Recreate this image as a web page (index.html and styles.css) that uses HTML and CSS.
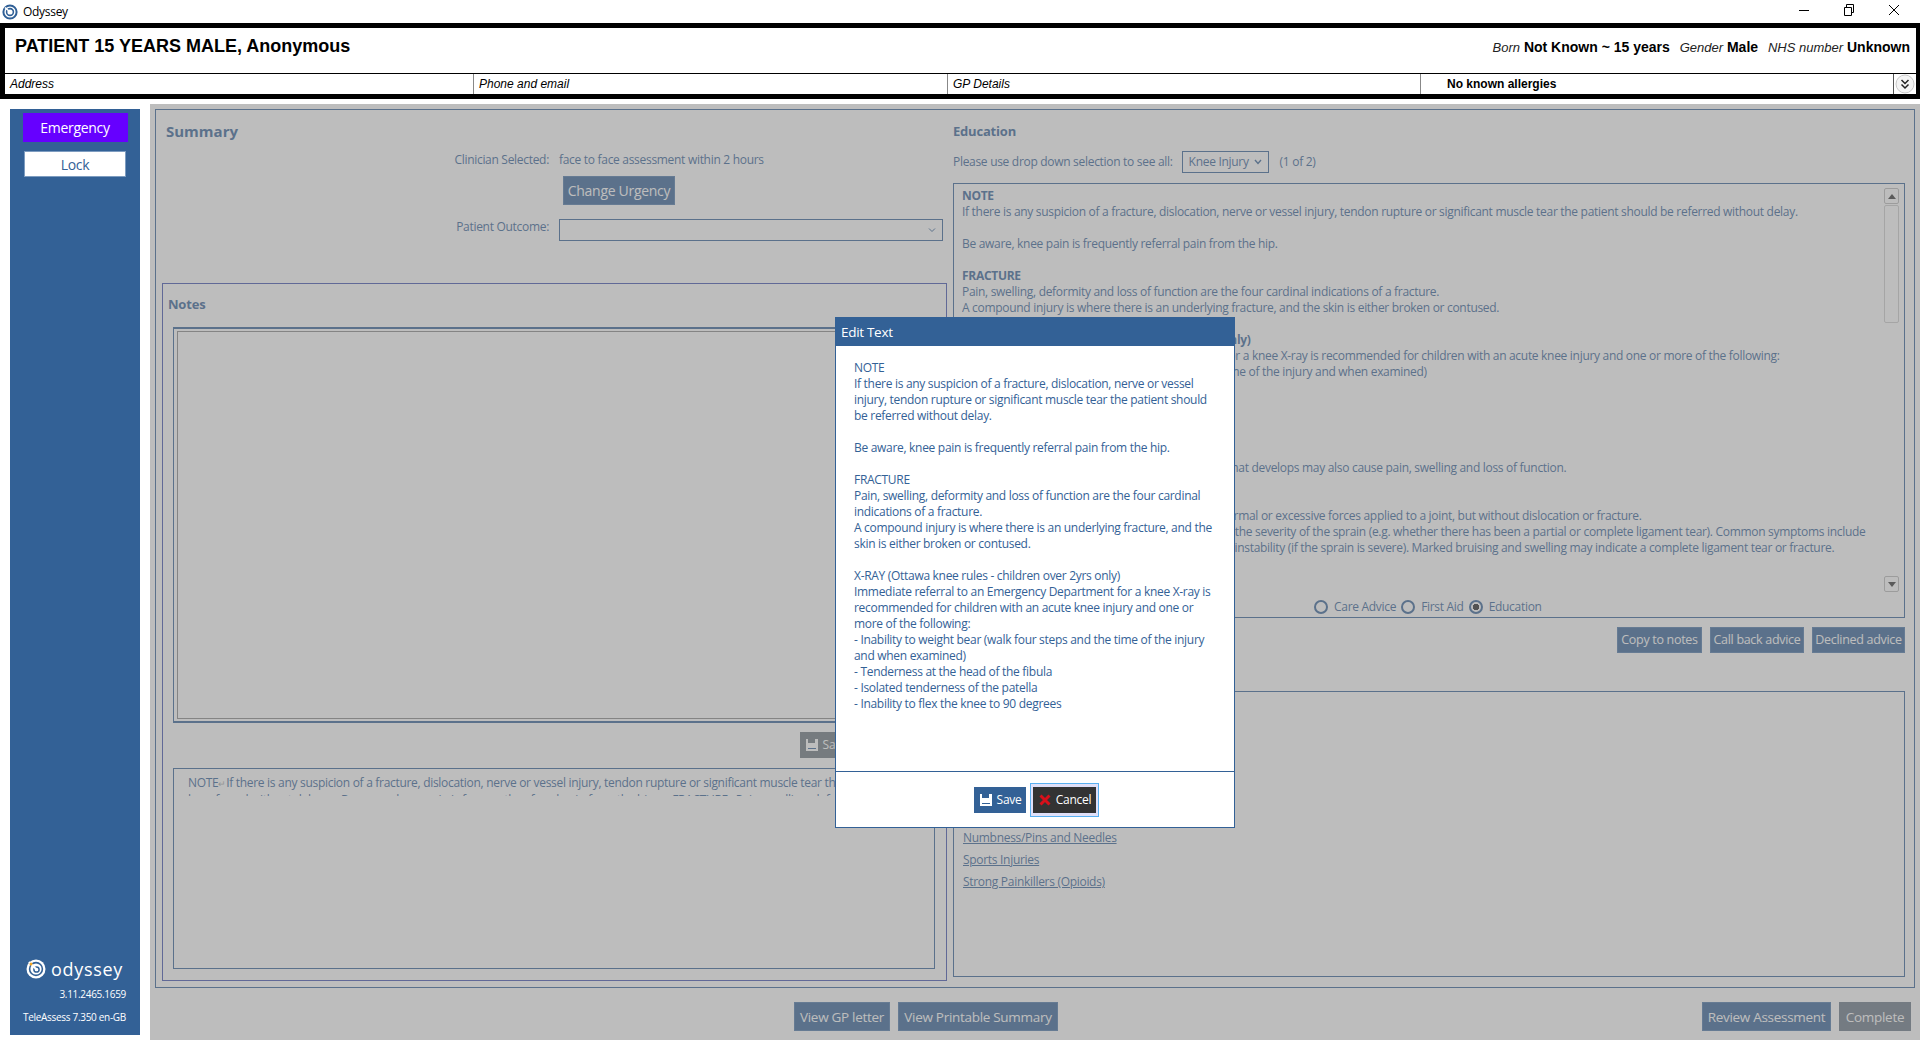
FILE: index.html
```html
<!DOCTYPE html>
<html lang="en">

<head>
    <meta charset="UTF-8">
    <meta name="viewport" content="width=device-width, initial-scale=1.0">
    <title>Odyssey</title>
    <link rel="stylesheet" href="styles.css">
</head>

<body>
    <div class="titlebar">
        <svg class="app-icon" width="16" height="16" viewBox="0 0 16 16">
            <circle cx="8" cy="8" r="6.6" fill="none" stroke="#2f5f96" stroke-width="2"/>
            <circle cx="8" cy="8" r="3.4" fill="none" stroke="#2f5f96" stroke-width="1.6"/>
            <path d="M3 3.5 L8 8" stroke="#fff" stroke-width="1.6"/>
        </svg>
        <span class="app-name">Odyssey</span>
        <div class="window-controls">
            <svg width="12" height="12" viewBox="0 0 12 12"><path d="M1 6.5 H11" stroke="#000"/></svg>
            <svg width="12" height="12" viewBox="0 0 12 12"><path d="M1.5 3.5 H8.5 V11.5 H1.5 Z M3.5 3.5 V0.5 H10.5 V8.5 H8.5" fill="none" stroke="#000"/></svg>
            <svg width="12" height="12" viewBox="0 0 12 12"><path d="M1 1 L11 11 M11 1 L1 11" stroke="#000"/></svg>
        </div>
    </div>

    <div class="patient-banner">
        <div class="patient-top">
            <div class="patient-name">PATIENT 15 YEARS MALE, Anonymous</div>
            <div class="patient-facts">
                <i>Born</i> <b>Not Known ~ 15 years</b>
                <i class="fact-gap">Gender</i> <b>Male</b>
                <i class="fact-gap">NHS number</i> <b>Unknown</b>
            </div>
        </div>
        <div class="patient-bottom">
            <div class="patient-cell cell-address"><i>Address</i></div>
            <div class="patient-cell cell-phone"><i>Phone and email</i></div>
            <div class="patient-cell cell-gp"><i>GP Details</i></div>
            <div class="patient-cell cell-allergy"><b>No known allergies</b></div>
            <div class="expand-btn">
                <svg width="20" height="20" viewBox="0 0 20 20">
                    <circle cx="10" cy="10" r="9" fill="#f4f4f4" stroke="#c8c8c8"/>
                    <path d="M6.5 6 L10 9.5 L13.5 6 M6.5 10.5 L10 14 L13.5 10.5" fill="none" stroke="#222" stroke-width="1.5"/>
                </svg>
            </div>
        </div>
    </div>

    <div class="layout">
        <div class="sidebar-wrap">
            <div class="sidebar">
                <div class="btn-emergency">Emergency</div>
                <div class="btn-lock">Lock</div>
                <div class="brand">
                    <svg width="20" height="20" viewBox="0 0 20 20">
                        <circle cx="10" cy="10" r="9.5" fill="#fff"/>
                        <circle cx="10" cy="10" r="6.4" fill="none" stroke="#336196" stroke-width="1.6"/>
                        <circle cx="10.5" cy="10.5" r="2.6" fill="none" stroke="#336196" stroke-width="1.5"/>
                        <path d="M3 3 L10 10" stroke="#fff" stroke-width="2"/>
                        <circle cx="5" cy="5" r="1.5" fill="#f5a623"/>
                    </svg>
                    <span class="brand-name">odyssey</span>
                </div>
                <div class="version">3.11.2465.1659</div>
                <div class="version version-tele">TeleAssess 7.350 en-GB</div>
            </div>
        </div>

        <div class="main">
            <div class="panel">
                <div class="col-left">
                    <div class="summary">
                        <div class="heading-big">Summary</div>
                        <div class="summary-grid">
                            <div class="field-label">Clinician Selected:</div>
                            <div>face to face assessment within 2 hours</div>
                            <div></div>
                            <div><div class="btn btn-urgency">Change Urgency</div></div>
                            <div class="field-label">Patient Outcome:</div>
                            <div class="select-box outcome-select">
                                <svg width="8" height="6" viewBox="0 0 8 6"><path d="M1 1.5 L4 4.5 L7 1.5" fill="none" stroke="#336196"/></svg>
                            </div>
                        </div>
                    </div>

                    <div class="notes">
                        <div class="heading">Notes</div>
                        <div class="notes-editor">
                            <div class="notes-editor-inner"></div>
                        </div>
                        <div class="notes-actions">
                            <div class="btn btn-save-notes">
                                <svg width="14" height="14" viewBox="0 0 14 14"><path d="M1 1 H3 V5 H10 V1 H13 V13 H1 Z" fill="#fff"/><path d="M3 10.5 H11" stroke="#336196"/></svg>
                                Save
                            </div>
                        </div>
                        <div class="notes-log">
                            <div class="notes-log-text">NOTE<span class="return-mark">↵</span>If there is any suspicion of a fracture, dislocation, nerve or vessel injury, tendon rupture or significant muscle tear the patient should be referred without delay.<span class="return-mark">↵↵</span>Be aware, knee pain is frequently referral pain from the hip.<span class="return-mark">↵↵</span>FRACTURE<span class="return-mark">↵</span>Pain, swelling, deformity and loss of function are the four cardinal indications of a fracture.</div>
                        </div>
                    </div>
                </div>

                <div class="col-right">
                    <div class="heading edu-heading">Education</div>
                    <div class="edu-select-row">
                        <span>Please use drop down selection to see all:</span>
                        <div class="select-box edu-select">
                            Knee Injury
                            <svg width="8" height="6" viewBox="0 0 8 6"><path d="M1 1 L4 4.5 L7 1" fill="none" stroke="#336196" stroke-width="1.4"/></svg>
                        </div>
                        <span>(1 of 2)</span>
                    </div>

                    <div class="edu-box">
                        <div class="edu-body">
                            <div class="edu-scroll">
                                <div class="edu-text">
                                    <b>NOTE</b><br>
                                    If there is any suspicion of a fracture, dislocation, nerve or vessel injury, tendon rupture or significant muscle tear the patient should be referred without delay.<br>
                                    <br>
                                    Be aware, knee pain is frequently referral pain from the hip.<br>
                                    <br>
                                    <b>FRACTURE</b><br>
                                    Pain, swelling, deformity and loss of function are the four cardinal indications of a fracture.<br>
                                    A compound injury is where there is an underlying fracture, and the skin is either broken or contused.<br>
                                    <br>
                                    <b>X-RAY (Ottawa knee rules - children over 2yrs only)</b><br>
                                    Immediate referral to an Emergency Department for a knee X-ray is recommended for children with an acute knee injury and one or more of the following:<br>
                                    - Inability to weight bear (walk four steps and the time of the injury and when examined)<br>
                                    - Tenderness at the head of the fibula<br>
                                    - Isolated tenderness of the patella<br>
                                    - Inability to flex the knee to 90 degrees<br>
                                    <br>
                                    <b>SWELLING</b><br>
                                    Any associated bruising, bleeding or joint effusion that develops may also cause pain, swelling and loss of function.<br>
                                    <br>
                                    <b>SPRAINS</b><br>
                                    A sprain is a ligament injury usually caused by abnormal or excessive forces applied to a joint, but without dislocation or fracture.<br>
                                    Signs and symptoms can vary widely depending on the severity of the sprain (e.g. whether there has been a partial or complete ligament tear). Common symptoms include<br>
                                    pain, swelling, bruising, loss of movement and joint instability (if the sprain is severe). Marked bruising and swelling may indicate a complete ligament tear or fracture.<br>
                                    <br>
                                    <br>
                                    <span class="edu-clipped">If in doubt, seek advice</span>
                                </div>
                            </div>
                            <div class="scrollbar">
                                <div class="scroll-btn"><svg width="8" height="5" viewBox="0 0 8 5"><path d="M4 0 L8 5 H0 Z" fill="#333"/></svg></div>
                                <div class="scroll-thumb"></div>
                                <div class="scroll-btn scroll-btn-down"><svg width="8" height="5" viewBox="0 0 8 5"><path d="M0 0 H8 L4 5 Z" fill="#333"/></svg></div>
                            </div>
                        </div>
                        <div class="edu-radios">
                            <span class="radio"></span><span class="radio-label">Care Advice</span>
                            <span class="radio"></span><span class="radio-label">First Aid</span>
                            <span class="radio radio-on"></span><span class="radio-label">Education</span>
                        </div>
                    </div>

                    <div class="edu-actions">
                        <div class="btn btn-small btn-copy">Copy to notes</div>
                        <div class="btn btn-small btn-callback">Call back advice</div>
                        <div class="btn btn-small btn-declined">Declined advice</div>
                    </div>

                    <div class="links-box">
                        <a class="topic-link">Numbness/Pins and Needles</a>
                        <a class="topic-link">Sports Injuries</a>
                        <a class="topic-link">Strong Painkillers (Opioids)</a>
                    </div>
                </div>
            </div>

            <div class="footer">
                <div class="btn btn-footer btn-gp">View GP letter</div>
                <div class="btn btn-footer btn-printable">View Printable Summary</div>
                <div class="btn btn-footer btn-review">Review Assessment</div>
                <div class="btn btn-footer btn-grey">Complete</div>
            </div>

            <div class="overlay"></div>

            <div class="dialog">
                <div class="dialog-title">Edit Text</div>
                <div class="dialog-body">
                    NOTE<br>
                    If there is any suspicion of a fracture, dislocation, nerve or vessel<br>
                    injury, tendon rupture or significant muscle tear the patient should<br>
                    be referred without delay.<br>
                    <br>
                    Be aware, knee pain is frequently referral pain from the hip.<br>
                    <br>
                    FRACTURE<br>
                    Pain, swelling, deformity and loss of function are the four cardinal<br>
                    indications of a fracture.<br>
                    A compound injury is where there is an underlying fracture, and the<br>
                    skin is either broken or contused.<br>
                    <br>
                    X-RAY (Ottawa knee rules - children over 2yrs only)<br>
                    Immediate referral to an Emergency Department for a knee X-ray is<br>
                    recommended for children with an acute knee injury and one or<br>
                    more of the following:<br>
                    - Inability to weight bear (walk four steps and the time of the injury<br>
                    and when examined)<br>
                    - Tenderness at the head of the fibula<br>
                    - Isolated tenderness of the patella<br>
                    - Inability to flex the knee to 90 degrees
                </div>
                <div class="dialog-footer">
                    <div class="dialog-btn dialog-save">
                        <svg width="14" height="14" viewBox="0 0 14 14"><path d="M1 1 H3 V5 H10 V1 H13 V13 H1 Z" fill="#fff"/><path d="M3 10.5 H11" stroke="#336196"/></svg>
                        Save
                    </div>
                    <div class="cancel-focus">
                        <div class="dialog-btn dialog-cancel">
                            <svg width="14" height="14" viewBox="0 0 14 14"><path d="M2.5 2.5 L11.5 11.5 M11.5 2.5 L2.5 11.5" stroke="#d8101a" stroke-width="3"/></svg>
                            Cancel
                        </div>
                    </div>
                </div>
            </div>
        </div>
    </div>
</body>

</html>
```

FILE: styles.css
```css
* {
    box-sizing: border-box;
}

body {
    margin: 0;
    width: 1920px;
    height: 1040px;
    overflow: hidden;
    background-color: #fff;
    font-family: "Open Sans", "Noto Sans", sans-serif;
    font-size: 12px;
    line-height: 16px;
    letter-spacing: -0.3px;
    color: #336196;
}

.titlebar {
    height: 23px;
    display: flex;
    align-items: center;
    padding-left: 2px;
    color: #000;
}

.app-name {
    margin-left: 5px;
}

.window-controls {
    margin-left: auto;
    display: flex;
    gap: 33px;
    padding: 0 20px 3px 0;
}

.patient-banner {
    height: 76px;
    border: solid #000;
    border-width: 5px 4px 5px 5px;
    font-family: "Liberation Sans", Arial, sans-serif;
    letter-spacing: 0;
    color: #000;
}

.patient-top {
    height: 45px;
    display: flex;
    justify-content: space-between;
    border-bottom: 1px solid #000;
    box-sizing: content-box;
}

.patient-name {
    font-size: 18px;
    font-weight: bold;
    line-height: 20px;
    padding: 8px 0 0 10px;
}

.patient-facts {
    font-size: 14px;
    line-height: 18px;
    padding: 10px 6px 0 0;
}

.patient-facts i {
    font-size: 13px;
    color: #222;
}

.fact-gap {
    margin-left: 6px;
}

.patient-bottom {
    height: 20px;
    display: flex;
    font-size: 12px;
    line-height: 20px;
}

.patient-cell {
    padding-left: 5px;
    border-right: 1px solid #888;
}

.cell-address {
    width: 469px;
}

.cell-phone {
    width: 474px;
}

.cell-gp {
    width: 473px;
}

.cell-allergy {
    width: 473px;
    padding-left: 26px;
    border-right: 1px solid #555;
}

.expand-btn {
    flex: 1;
    display: flex;
    align-items: center;
    justify-content: center;
}

.layout {
    height: 941px;
    margin-top: 5px;
    display: flex;
}

.sidebar-wrap {
    width: 150px;
    padding: 5px 10px 10px;
}

.sidebar {
    height: 100%;
    background-color: #336196;
    display: flex;
    flex-direction: column;
    align-items: center;
    padding-top: 4px;
    color: #fff;
}

.btn-emergency {
    width: 105px;
    height: 29px;
    background-color: #6600ff;
    color: #fff;
    font-size: 14px;
    line-height: 29px;
    text-align: center;
}

.btn-lock {
    width: 102px;
    height: 26px;
    margin-top: 9px;
    background-color: #fff;
    border: 1px solid #7d9cc0;
    color: #336196;
    font-size: 14px;
    line-height: 26px;
    text-align: center;
}

.brand {
    margin-top: auto;
    width: 100%;
    display: flex;
    align-items: center;
    padding-left: 16px;
}

.brand-name {
    margin-left: 5px;
    font-size: 18px;
    line-height: 20px;
    letter-spacing: 0.7px;
}

.version {
    width: 100%;
    margin-top: 8px;
    padding-right: 14px;
    font-size: 10px;
    line-height: 14px;
    letter-spacing: -0.3px;
    text-align: right;
}

.version-tele {
    margin-top: 9px;
    margin-bottom: 11px;
}

.main {
    position: relative;
    flex: 1;
}

.overlay {
    position: absolute;
    inset: 0;
    background-color: rgba(128, 128, 128, 0.52);
}

.panel {
    height: 879px;
    margin: 5px 5px 0;
    border: 1px solid #336196;
    display: flex;
}

.col-left {
    width: 796px;
    padding-left: 6px;
    padding-right: 5px;
}

.col-right {
    flex: 1;
    padding: 0 9px 0 1px;
}

.heading {
    font-size: 13px;
    font-weight: bold;
    line-height: 16px;
    letter-spacing: -0.2px;
}

.heading-big {
    font-size: 15px;
    font-weight: bold;
    line-height: 20px;
    letter-spacing: 0;
    padding-left: 4px;
}

.summary {
    height: 173px;
    padding-top: 11px;
}

.summary-grid {
    display: grid;
    grid-template-columns: 387px 384px;
    column-gap: 10px;
    margin-top: 11px;
}

.field-label {
    text-align: right;
}

.btn {
    display: inline-flex;
    align-items: center;
    justify-content: center;
    background-color: #336196;
    color: #fff;
    font-size: 14px;
    border: 1px solid #4a76a8;
}

.btn-urgency {
    width: 112px;
    height: 29px;
    margin: 8px 0 14px 4px;
}

.select-box {
    display: flex;
    align-items: center;
    justify-content: flex-end;
    border: 1px solid #336196;
    height: 22px;
    background-color: #fff;
    padding-right: 6px;
}

.notes {
    height: 698px;
    border: 1px solid #4050b0;
    padding: 12px 11px 0 10px;
}

.notes .heading {
    margin-left: -5px;
}

.notes-editor {
    height: 396px;
    margin-top: 15px;
    border: 1px solid #336196;
    border-top-width: 2px;
    border-bottom-width: 2px;
    padding: 2px 3px;
}

.notes-editor-inner {
    height: 100%;
    border: 1px solid #888;
}

.notes-actions {
    margin-top: 9px;
    padding-left: 627px;
}

.btn-save-notes {
    width: 52px;
    height: 26px;
    gap: 4px;
    font-size: 12px;
    background-color: #6c757d;
    border: 0;
}

.notes-log {
    height: 201px;
    margin-top: 10px;
    border: 1px solid #336196;
    padding: 6px 10px 0 14px;
}

.notes-log-text {
    height: 21px;
    overflow: hidden;
    line-height: 16px;
}

.return-mark {
    color: #aaa;
    font-size: 9px;
}

.edu-heading {
    padding-top: 13px;
}

.edu-select-row {
    display: flex;
    align-items: center;
    height: 22px;
    margin-top: 12px;
}

.edu-select {
    width: 87px;
    margin-left: 9px;
    margin-right: 11px;
    justify-content: space-between;
    padding: 0 6px;
}

.edu-box {
    height: 435px;
    margin-top: 10px;
    border: 1px solid #336196;
    padding: 4px 5px 0 8px;
}

.edu-body {
    display: flex;
    height: 404px;
}

.edu-scroll {
    flex: 1;
    overflow: hidden;
}

.edu-text {
    white-space: nowrap;
}

.scrollbar {
    width: 15px;
    display: flex;
    flex-direction: column;
    align-items: center;
}

.scroll-btn {
    width: 15px;
    height: 16px;
    display: flex;
    align-items: center;
    justify-content: center;
    background-color: #fff;
    border: 1px solid #bbb;
    border-radius: 2px;
}

.scroll-btn-down {
    margin-top: auto;
}

.scroll-thumb {
    width: 15px;
    height: 118px;
    margin-top: 1px;
    background-color: #fff;
    border: 1px solid #ccc;
    border-radius: 2px;
}

.edu-radios {
    display: flex;
    align-items: center;
    height: 16px;
    margin-top: 7px;
    padding-left: 352px;
}

.radio {
    width: 14px;
    height: 14px;
    border: 2px solid #336196;
    border-radius: 50%;
    background-color: #fff;
}

.radio-on {
    background: radial-gradient(circle, #222 0 3px, #fff 3.5px);
}

.radio-label {
    margin-left: 6px;
    margin-right: 5px;
}

.edu-actions {
    display: flex;
    justify-content: flex-end;
    gap: 8px;
    margin-top: 9px;
}

.btn-small {
    height: 26px;
    font-size: 12.5px;
}

.btn-copy {
    width: 85px;
}

.btn-callback {
    width: 94px;
}

.btn-declined {
    width: 93px;
}

.links-box {
    height: 286px;
    margin-top: 38px;
    border: 1px solid #336196;
    padding: 138px 0 0 9px;
    display: flex;
    flex-direction: column;
    gap: 6px;
    align-items: flex-start;
}

.topic-link {
    color: #336196;
    text-decoration: underline;
}

.footer {
    height: 52px;
    display: flex;
    align-items: flex-start;
    gap: 8px;
    padding: 14px 9px 0 644px;
}

.btn-footer {
    height: 29px;
    font-size: 13.5px;
}

.btn-gp {
    width: 96px;
}

.btn-printable {
    width: 160px;
}

.btn-review {
    width: 129px;
    margin-left: auto;
}

.btn-grey {
    width: 72px;
    background-color: #677584;
    border-color: #677584;
}

.dialog {
    position: absolute;
    left: 685px;
    top: 213px;
    width: 400px;
    height: 511px;
    background-color: #fff;
    border: 1px solid #336196;
    display: flex;
    flex-direction: column;
}

.dialog-title {
    height: 28px;
    padding-left: 5px;
    background-color: #336196;
    color: #fff;
    font-size: 13.5px;
    line-height: 28px;
}

.dialog-body {
    flex: 1;
    padding: 14px 0 0 18px;
    white-space: nowrap;
}

.dialog-footer {
    height: 56px;
    border-top: 1px solid #336196;
    display: flex;
    align-items: center;
    justify-content: center;
    gap: 4px;
    padding-left: 3px;
}

.dialog-btn {
    height: 26px;
    display: flex;
    align-items: center;
    justify-content: center;
    gap: 4px;
    color: #fff;
    font-size: 12px;
}

.dialog-save {
    width: 52px;
    background-color: #336196;
}

.cancel-focus {
    padding: 3px 2px;
    border: 1px solid #5ab0f0;
    background-color: #e0e0f8;
    box-sizing: content-box;
}

.dialog-cancel {
    width: 63px;
    background-color: #333;
}
```
